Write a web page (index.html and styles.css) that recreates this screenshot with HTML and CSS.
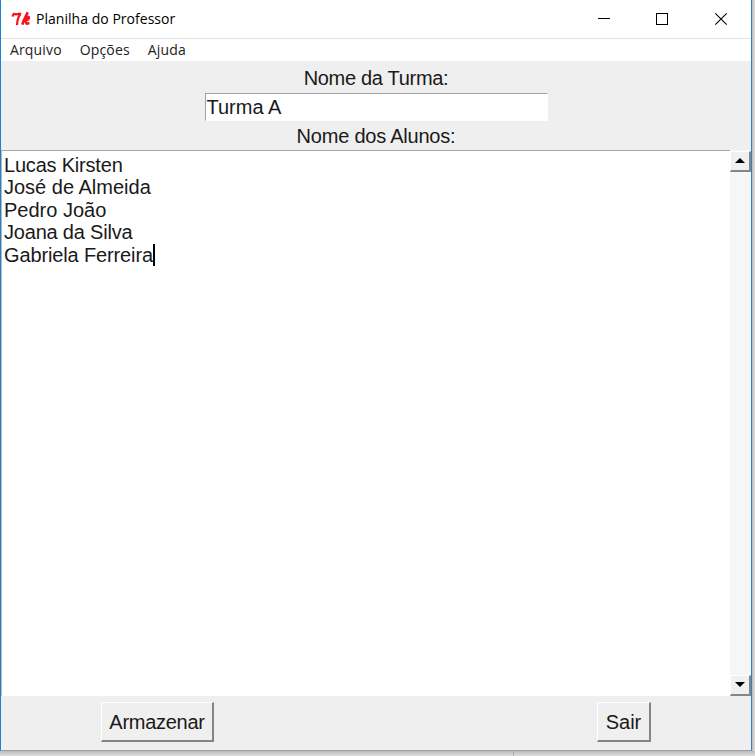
FILE: index.html
```html
<!DOCTYPE html>
<html lang="pt-BR">
<head>
<meta charset="utf-8">
<title>Planilha do Professor</title>
<link rel="stylesheet" href="styles.css">
</head>
<body>
<div class="window">
  <header class="titlebar">
    <svg class="logo" width="20" height="16" viewBox="0 0 20 16" fill="none" stroke="#f5141c" stroke-linejoin="round">
      <path d="M1.4 5.6 L2.6 2.9 L5 3.4 L10.2 2.5" stroke-width="2.1"/>
      <path d="M9.4 3 C7.5 5.5 6.2 9 6 14" stroke-width="2.2"/>
      <path d="M16.8 1.4 C14.8 5.5 12.4 9 11.4 13.6" stroke-width="2.6"/>
      <path d="M12.8 9.6 C14 6.2 18.6 4.8 18 7 C17.4 8.6 15.4 9.4 14 9.7 L15.6 12.8 L18.4 12" stroke-width="2.4"/>
    </svg>
    <span class="caption">Planilha do Professor</span>
    <div class="controls">
      <svg width="12" height="12" viewBox="0 0 12 12"><path d="M1 5.5H13" stroke="#000"/></svg>
      <svg width="12" height="12" viewBox="0 0 12 12"><rect x=".5" y=".5" width="11" height="11" fill="none" stroke="#000"/></svg>
      <svg width="12" height="12" viewBox="0 0 12 12"><path d="M.3 .3L11.7 11.7M11.7 .3L.3 11.7" stroke="#000" stroke-width="1.1"/></svg>
    </div>
  </header>
  <nav class="menu"><span>Arquivo</span><span>Opções</span><span>Ajuda</span></nav>
  <section class="form">
    <div class="label label-class">Nome da Turma:</div>
    <div class="entry">Turma A</div>
    <div class="label label-names">Nome dos Alunos:</div>
  </section>
  <main class="editor">
    <div class="text">
      <div class="tight">Lucas Kirsten</div>
      <div>José de Almeida</div>
      <div>Pedro João</div>
      <div class="tight">Joana da Silva</div>
      <div class="current">Gabriela Ferreira<i class="caret"></i></div>
    </div>
    <div class="scrollbar">
      <div class="arrow"><svg width="10" height="6" viewBox="0 0 10 6"><path d="M5 0L10 5H0Z"/></svg></div>
      <div class="arrow"><svg width="10" height="6" viewBox="0 0 10 6"><path d="M0 0H10L5 5Z"/></svg></div>
    </div>
  </main>
  <footer class="actions">
    <div class="button store">Armazenar</div>
    <div class="button exit">Sair</div>
  </footer>
</div>
<div class="backdrop"></div>
</body>
</html>
```

FILE: styles.css
```css
* { box-sizing: border-box; }
body {
  margin: 0;
  width: 755px;
  height: 756px;
  overflow: hidden;
  background: linear-gradient(90deg, #b8b8b8 751px, #bcbcbc 752px, #dedede 755px);
  font: 20px/22.5px "Liberation Sans", sans-serif;
  color: #1a1a1a;
}
.window {
  width: 752px;
  height: 751px;
  display: flex;
  flex-direction: column;
  background: #efefef;
  border-left: 1px solid #1883d7;
  border-right: 1px solid #3480bd;
  border-bottom: 1px solid #a0a0a0;
}
.titlebar {
  height: 39px;
  display: flex;
  align-items: center;
  padding: 0 24px 0 10px;
  background: #fff;
  border-bottom: 1px solid #e2e2e2;
}
.logo { flex: none; margin-right: 5px; }
.caption {
  font: 14px/20px "Open Sans", sans-serif;
  letter-spacing: 0.03px;
  color: #000;
}
.controls { margin-left: auto; display: flex; gap: 47px; }
.controls svg { display: block; overflow: visible; }
.menu {
  height: 22px;
  display: flex;
  gap: 18px;
  padding-left: 9px;
  background: #fff;
  font: 14px/22px "Open Sans", sans-serif;
  letter-spacing: 0.15px;
  color: #222;
}
.form {
  height: 89px;
  display: flex;
  flex-direction: column;
  align-items: center;
}
.label { line-height: 34px; height: 32px; white-space: nowrap; letter-spacing: -0.3px; }
.label-names { line-height: 31px; height: 29px; letter-spacing: -0.22px; }
.entry {
  width: 343px;
  height: 28px;
  padding: 0 1px;
  line-height: 27px;
  background: #fff;
  border: 1px solid #fff;
  border-top-color: #a0a0a0;
  border-left-color: #a0a0a0;
}
.editor {
  height: 546px;
  display: flex;
}
.text {
  flex: 1;
  padding: 2.5px 0 0 2px;
  background: #fff;
  border-top: 1px solid #a8a8a8;
  border-left: 1px solid #b8b8b8;
  white-space: nowrap;
}
.tight { letter-spacing: -0.2px; }
.current { display: flex; letter-spacing: -0.13px; }
.caret { width: 2px; height: 22px; background: #000; }
.scrollbar {
  width: 21px;
  display: flex;
  flex-direction: column;
  justify-content: space-between;
  padding-top: 1px;
  background: #f6f6f6;
}
.arrow {
  height: 21px;
  display: flex;
  align-items: center;
  justify-content: center;
  background: #f0f0f0;
  border: 1px solid #fff;
  border-right: 2px solid #858585;
  border-bottom: 2px solid #858585;
}
.actions {
  flex: 1;
  display: flex;
  align-items: flex-start;
  justify-content: space-between;
  padding: 6px 100px 0 100px;
}
.button {
  height: 40px;
  line-height: 38px;
  text-align: center;
  white-space: nowrap;
  border: 1px solid #fff;
  border-right: 2px solid #858585;
  border-bottom: 2px solid #858585;
}
.store { width: 113px; letter-spacing: -0.28px; }
.exit { width: 54px; }
.backdrop {
  width: 755px;
  height: 5px;
  background:
    linear-gradient(#a6a6a6, #b8b8b8) 513px 0 / 1px 5px no-repeat,
    linear-gradient(#bababa, #dedede);
}
```
